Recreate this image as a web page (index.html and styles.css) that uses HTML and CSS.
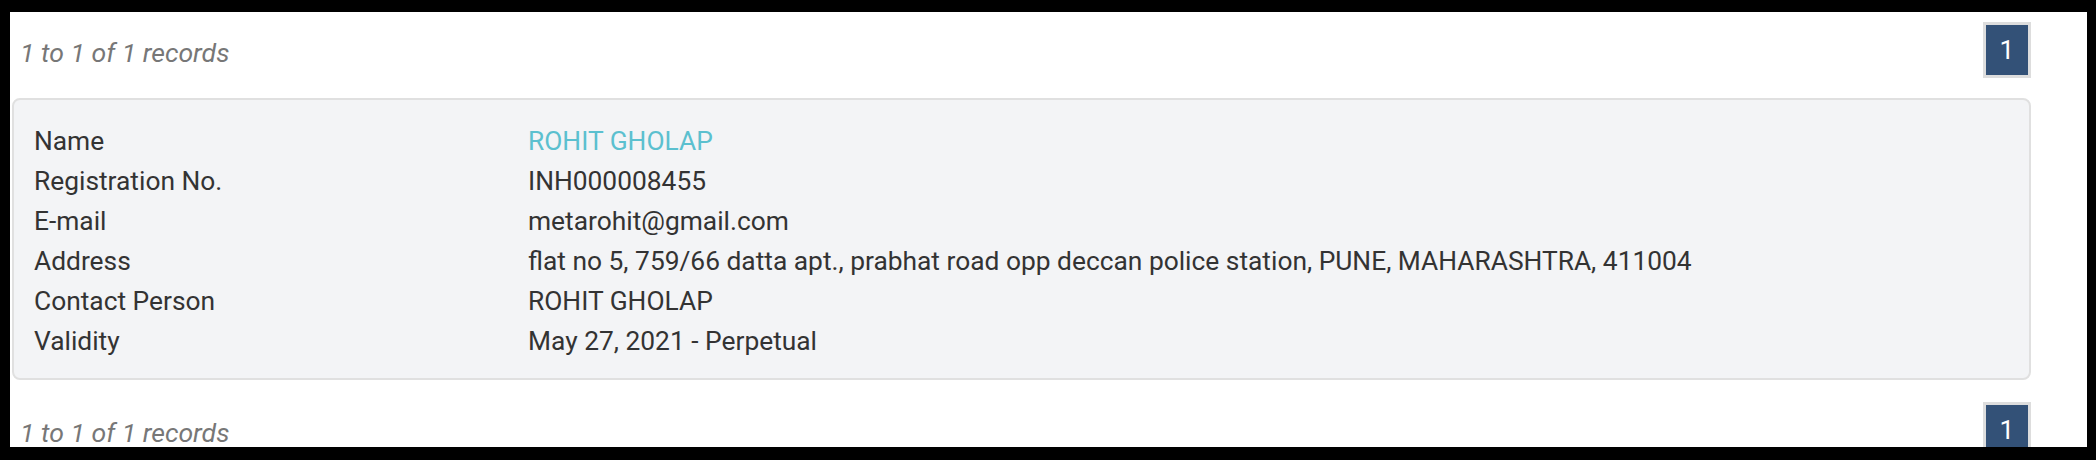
FILE: index.html
```html
<!DOCTYPE html>
<html lang="en">
<head>
    <meta charset="UTF-8">
    <meta name="viewport" content="width=device-width, initial-scale=1.0">
    <title>Registered Advisers</title>
    <link rel="stylesheet" href="styles.css">
</head>
<body>
    <div class="page">
        <div class="pager-row">
            <div class="records">1 to 1 of 1 records</div>
            <a class="page-num" href="#">1</a>
        </div>

        <div class="card">
            <div class="row">
                <div class="label">Name</div>
                <div class="value name">ROHIT GHOLAP</div>
            </div>
            <div class="row">
                <div class="label">Registration No.</div>
                <div class="value">INH000008455</div>
            </div>
            <div class="row">
                <div class="label">E-mail</div>
                <div class="value">metarohit@gmail.com</div>
            </div>
            <div class="row">
                <div class="label">Address</div>
                <div class="value">flat no 5, 759/66 datta apt., prabhat road opp deccan police station, PUNE, MAHARASHTRA, 411004</div>
            </div>
            <div class="row">
                <div class="label">Contact Person</div>
                <div class="value">ROHIT GHOLAP</div>
            </div>
            <div class="row">
                <div class="label">Validity</div>
                <div class="value">May 27, 2021 - Perpetual</div>
            </div>
        </div>

        <div class="pager-row">
            <div class="records">1 to 1 of 1 records</div>
            <a class="page-num" href="#">1</a>
        </div>
    </div>
</body>
</html>
```

FILE: styles.css
```css
html, body {
    margin: 0;
    padding: 0;
    height: 460px;
    overflow: hidden;
}
body {
    background: #000;
    font-family: Roboto, 'Liberation Sans', Arial, sans-serif;
    font-size: 26.35px;
    line-height: 40px;
    color: #333;
}

/* White sheet inside the black frame */
.page {
    background: #fff;
    margin: 12px 9px 0 10px;
    height: 435px;
    padding: 10px 56px 0 2px;
    box-sizing: border-box;
    overflow: hidden;
}

/* Pager */
.pager-row {
    display: flex;
    justify-content: space-between;
    align-items: center;
    height: 56px;
    padding-left: 8px;
}
.records {
    font-style: italic;
    font-size: 26.6px;
    color: #777;
    padding-top: 5px;
}
.page-num {
    width: 48px;
    height: 56px;
    box-sizing: border-box;
    border: 3px solid #ddd;
    background: #335177;
    color: #fff;
    text-decoration: none;
    display: flex;
    align-items: center;
    justify-content: center;
}

/* Record card */
.card {
    margin: 20px 0 22px;
    background: #f3f4f6;
    border: 2px solid #e0e0e0;
    border-radius: 8px;
    padding: 21px 20px 17px;
}
.row {
    display: grid;
    grid-template-columns: 494px 1fr;
}
.value.name {
    color: #5bc0cf;
}
```
